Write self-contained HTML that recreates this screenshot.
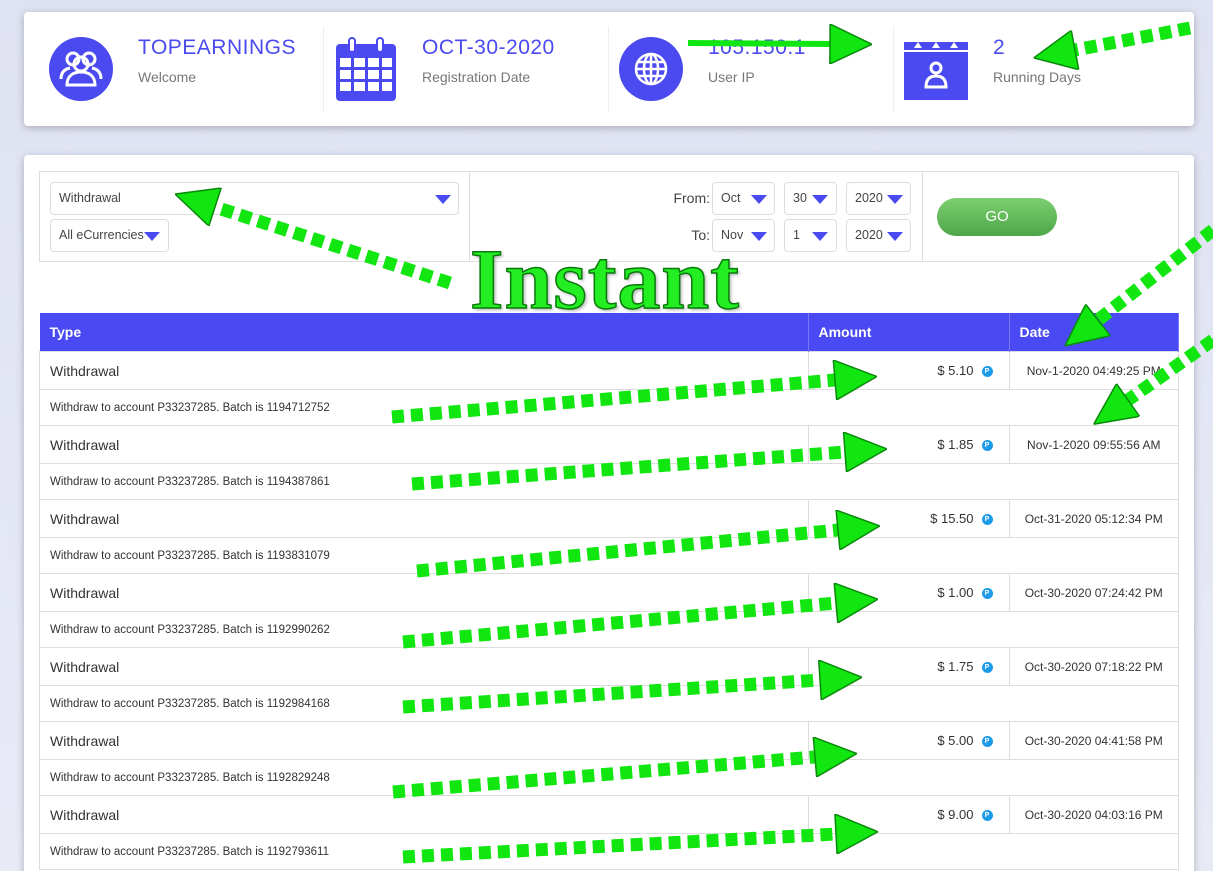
<!DOCTYPE html><html><head><style>
html,body{margin:0;width:1213px;height:871px;overflow:hidden}
body{background:linear-gradient(#dfe2f2,#e8eaf6);font-family:"Liberation Sans",sans-serif;position:relative}
.card{position:absolute;background:#fff;border-radius:4px;box-shadow:0 2px 8px rgba(0,0,0,.25)}
.ttl{position:absolute;color:#4a4af0;font-size:21px;letter-spacing:.5px}
.sub{position:absolute;color:#777;font-size:14px}
.sel{position:absolute;border:1px solid #ddd;border-radius:4px;background:#fff;font-size:12.5px;color:#444;box-sizing:border-box;padding-left:8px;line-height:31px}
.tri{position:absolute;width:0;height:0;border-left:8px solid transparent;border-right:8px solid transparent;border-top:9px solid #4a4af0;top:12px}
table{position:absolute;left:39px;top:313px;width:1140px;border-collapse:collapse;font-size:14px;color:#333}
th{background:#4a4af4;color:#fff;text-align:left;font-weight:bold;height:38px;padding:0 10px;border-right:1px solid #7777f8;font-size:14px}
td{border:1px solid #ddd;padding:0 10px}
tr.m td{height:37px}
tr.d td{height:35px;font-size:11.5px}
.amt{text-align:right;padding-right:16px;font-size:13px}
.amt i{display:inline-block;width:11px;height:11px;border-radius:50%;background:#1e9be8;vertical-align:middle;margin-left:8px;color:#fff;font-size:7px;font-style:normal;text-align:center;line-height:11px;font-weight:bold}
.dt{text-align:center;font-size:12px}
</style></head><body>
<div class="card" style="left:24px;top:12px;width:1170px;height:114px">
<div style="position:absolute;left:299px;top:14px;width:1px;height:86px;background:#eee"></div>
<div style="position:absolute;left:584px;top:14px;width:1px;height:86px;background:#eee"></div>
<div style="position:absolute;left:869px;top:14px;width:1px;height:86px;background:#eee"></div>
<svg style="position:absolute;left:25px;top:25px" width="64" height="64"><circle cx="32" cy="32" r="32" fill="#4a4af0"/><g fill="none" stroke="#fff" stroke-width="3"><circle cx="24" cy="22" r="6"/><circle cx="40" cy="22" r="6"/><circle cx="32" cy="27" r="7"/><path d="M18 48c0-9 6-13 14-13s14 4 14 13z"/><path d="M12 42c0-7 4-10 9-11M52 42c0-7-4-10-9-11"/></g></svg>
<div class="ttl" style="left:114px;top:24px">TOPEARNINGS</div><div class="sub" style="left:114px;top:57px">Welcome</div>
<svg style="position:absolute;left:311px;top:24px" width="62" height="66"><rect x="1" y="8" width="60" height="57" rx="4" fill="#4a4af0"/><rect x="14" y="2" width="6" height="14" rx="3" fill="#fff" stroke="#4a4af0" stroke-width="2"/><rect x="42" y="2" width="6" height="14" rx="3" fill="#fff" stroke="#4a4af0" stroke-width="2"/><g fill="#fff"><rect x="5" y="22" width="11" height="9"/><rect x="19" y="22" width="11" height="9"/><rect x="33" y="22" width="11" height="9"/><rect x="47" y="22" width="10" height="9"/><rect x="5" y="34" width="11" height="9"/><rect x="19" y="34" width="11" height="9"/><rect x="33" y="34" width="11" height="9"/><rect x="47" y="34" width="10" height="9"/><rect x="5" y="46" width="11" height="9"/><rect x="19" y="46" width="11" height="9"/><rect x="33" y="46" width="11" height="9"/><rect x="47" y="46" width="10" height="9"/></g></svg>
<div class="ttl" style="left:398px;top:24px">OCT-30-2020</div><div class="sub" style="left:398px;top:57px">Registration Date</div>
<svg style="position:absolute;left:595px;top:25px" width="64" height="64"><circle cx="32" cy="32" r="32" fill="#4a4af0"/><g fill="none" stroke="#fff" stroke-width="2.5"><circle cx="32" cy="32" r="15"/><ellipse cx="32" cy="32" rx="7" ry="15"/><path d="M17 32h30M19 25h26M19 39h26M32 17v30"/></g></svg>
<div class="ttl" style="left:684px;top:24px">105.150.1</div><div class="sub" style="left:684px;top:57px">User IP</div>
<svg style="position:absolute;left:880px;top:24px" width="64" height="66"><rect x="0" y="6" width="64" height="58" fill="#4a4af0"/><rect x="0" y="14" width="64" height="2" fill="#fff"/><g fill="#fff"><path d="M10 12l4-6 4 6z"/><path d="M28 12l4-6 4 6z"/><path d="M46 12l4-6 4 6z"/></g><g fill="none" stroke="#fff" stroke-width="3"><circle cx="32" cy="32" r="5"/><path d="M22 51c0-8 4-11 10-11s10 3 10 11z"/></g></svg>
<div class="ttl" style="left:969px;top:24px">2</div><div class="sub" style="left:969px;top:57px">Running Days</div>
</div>
<div class="card" style="left:24px;top:155px;width:1170px;height:730px"></div>
<div style="position:absolute;left:39px;top:171px;width:1140px;height:91px;border:1px solid #ddd;box-sizing:border-box">
<div style="position:absolute;left:429px;top:0;width:1px;height:90px;background:#ddd"></div>
<div style="position:absolute;left:882px;top:0;width:1px;height:90px;background:#ddd"></div>
</div>
<div class="sel" style="left:50px;top:182px;width:409px;height:33px">Withdrawal<div class="tri" style="left:384px"></div></div>
<div class="sel" style="left:50px;top:219px;width:119px;height:33px">All eCurrencies<div class="tri" style="left:93px"></div></div>
<div style="position:absolute;left:660px;top:190px;font-size:14px;color:#444;width:50px;text-align:right">From:</div>
<div style="position:absolute;left:660px;top:227px;font-size:14px;color:#444;width:50px;text-align:right">To:</div>
<div class="sel" style="left:712px;top:182px;width:63px;height:33px">Oct<div class="tri" style="left:38px"></div></div>
<div class="sel" style="left:784px;top:182px;width:53px;height:33px">30<div class="tri" style="left:27px"></div></div>
<div class="sel" style="left:846px;top:182px;width:65px;height:33px">2020<div class="tri" style="left:40px"></div></div>
<div class="sel" style="left:712px;top:219px;width:63px;height:33px">Nov<div class="tri" style="left:38px"></div></div>
<div class="sel" style="left:784px;top:219px;width:53px;height:33px">1<div class="tri" style="left:27px"></div></div>
<div class="sel" style="left:846px;top:219px;width:65px;height:33px">2020<div class="tri" style="left:40px"></div></div>
<div style="position:absolute;left:937px;top:198px;width:120px;height:38px;border-radius:19px;background:linear-gradient(#7ccf70,#4ea648);color:#fff;font-size:15px;text-align:center;line-height:38px">GO</div>
<table>
<tr><th style="width:748px">Type</th><th style="width:180px">Amount</th><th>Date</th></tr>
<tr class="m"><td>Withdrawal</td><td class="amt">$ 5.10<i>P</i></td><td class="dt">Nov-1-2020 04:49:25 PM</td></tr>
<tr class="d"><td colspan="3">Withdraw to account P33237285. Batch is 1194712752</td></tr>
<tr class="m"><td>Withdrawal</td><td class="amt">$ 1.85<i>P</i></td><td class="dt">Nov-1-2020 09:55:56 AM</td></tr>
<tr class="d"><td colspan="3">Withdraw to account P33237285. Batch is 1194387861</td></tr>
<tr class="m"><td>Withdrawal</td><td class="amt">$ 15.50<i>P</i></td><td class="dt">Oct-31-2020 05:12:34 PM</td></tr>
<tr class="d"><td colspan="3">Withdraw to account P33237285. Batch is 1193831079</td></tr>
<tr class="m"><td>Withdrawal</td><td class="amt">$ 1.00<i>P</i></td><td class="dt">Oct-30-2020 07:24:42 PM</td></tr>
<tr class="d"><td colspan="3">Withdraw to account P33237285. Batch is 1192990262</td></tr>
<tr class="m"><td>Withdrawal</td><td class="amt">$ 1.75<i>P</i></td><td class="dt">Oct-30-2020 07:18:22 PM</td></tr>
<tr class="d"><td colspan="3">Withdraw to account P33237285. Batch is 1192984168</td></tr>
<tr class="m"><td>Withdrawal</td><td class="amt">$ 5.00<i>P</i></td><td class="dt">Oct-30-2020 04:41:58 PM</td></tr>
<tr class="d"><td colspan="3">Withdraw to account P33237285. Batch is 1192829248</td></tr>
<tr class="m"><td>Withdrawal</td><td class="amt">$ 9.00<i>P</i></td><td class="dt">Oct-30-2020 04:03:16 PM</td></tr>
<tr class="d"><td colspan="3">Withdraw to account P33237285. Batch is 1192793611</td></tr>
</table>
<div style="position:absolute;left:470px;top:229px;font-family:'Liberation Serif',serif;font-weight:bold;font-size:86px;color:#22ee22;-webkit-text-stroke:1.5px #0a7a0a;letter-spacing:1px;text-shadow:2px 2px 3px rgba(0,0,0,.3)">Instant</div>
<svg style="position:absolute;left:0;top:0" width="1213" height="871">
<defs><marker id="h" markerUnits="userSpaceOnUse" markerWidth="46" markerHeight="40" refX="4" refY="20" orient="auto"><path d="M4 0L46 20L4 40z" fill="#11e611" stroke="#0a8a0a" stroke-width="1.5"/></marker></defs>
<g fill="none" stroke="#11e611" stroke-width="13" stroke-dasharray="12 7" marker-end="url(#h)">
<path d="M392 417L835 380"/><path d="M412 484L845 452"/><path d="M417 571L838 530"/><path d="M403 642L836 603"/><path d="M403 707L820 680"/><path d="M393 792L815 757"/><path d="M403 857L836 834"/>
<path d="M450 283L215 207"/><path d="M1190 28L1075 50"/><path d="M1213 230L1098 320"/><path d="M1213 340L1128 400"/>
<path d="M688 43L830 44" stroke-dasharray="none" stroke-width="6"/>
</g></svg>
</body></html>
